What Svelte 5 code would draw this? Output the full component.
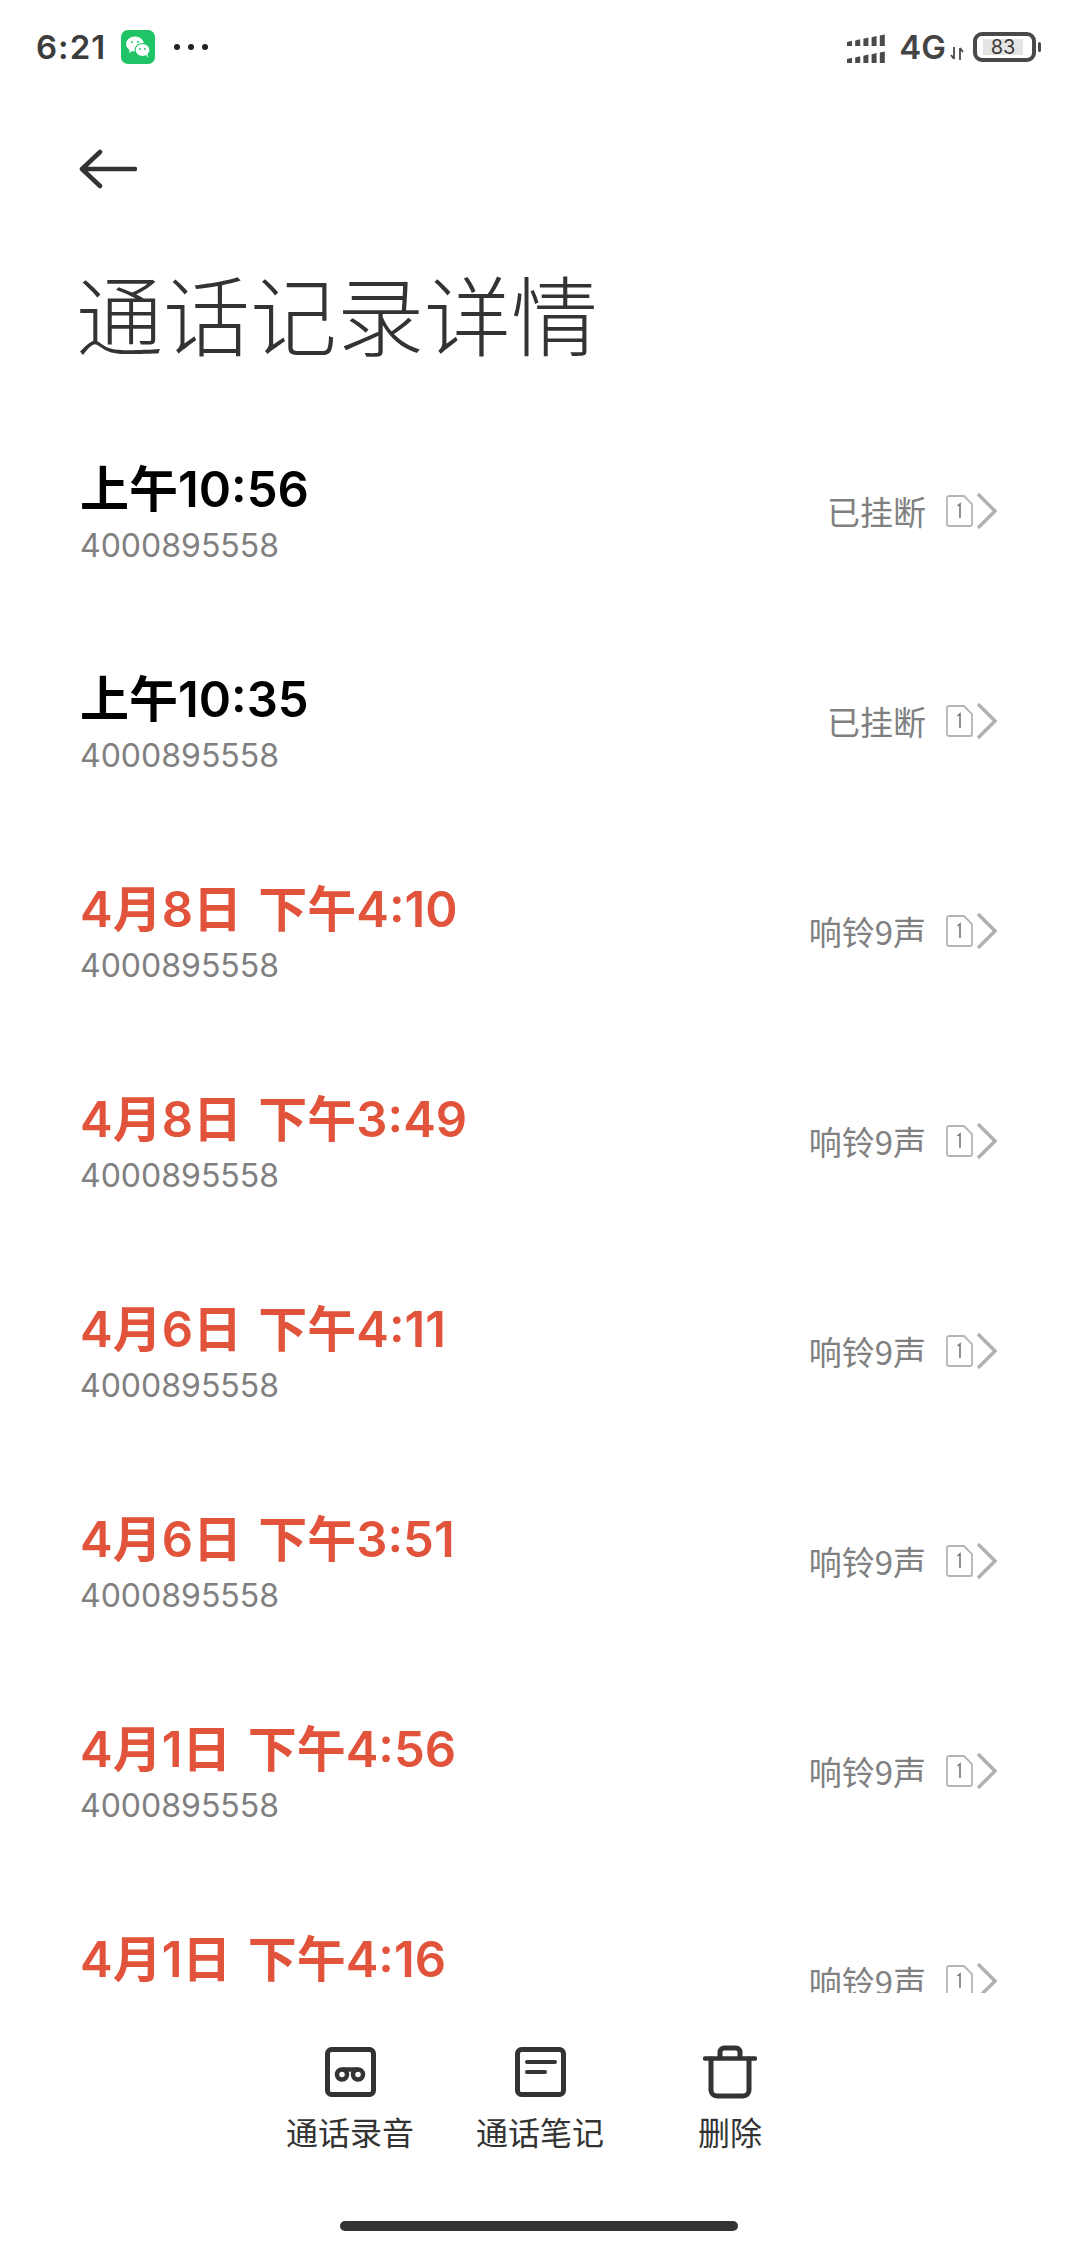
<script>
  const missed = "#e2533b";
  const calls = [
    { time: "上午10:56", status: "已挂断" },
    { time: "上午10:35", status: "已挂断" },
    { time: "4月8日 下午4:10", status: "响铃9声", missed: true },
    { time: "4月8日 下午3:49", status: "响铃9声", missed: true },
    { time: "4月6日 下午4:11", status: "响铃9声", missed: true },
    { time: "4月6日 下午3:51", status: "响铃9声", missed: true },
    { time: "4月1日 下午4:56", status: "响铃9声", missed: true },
    { time: "4月1日 下午4:16", status: "响铃9声", missed: true }
  ];
  const bars = [0, 1, 2, 3, 4];
</script>

<div class="page">
  <div class="status">
    <div class="status-left">
      <span class="clock">6:21</span>
      <svg class="wechat" width="34" height="34" viewBox="0 0 34 34">
        <rect width="34" height="34" rx="7" fill="#1fc467" />
        <ellipse cx="14" cy="14" rx="9" ry="7.5" fill="#fff" />
        <path d="M9 19l-1 4 5-3z" fill="#fff" />
        <ellipse cx="21.5" cy="20" rx="7.5" ry="6.5" fill="#fff" stroke="#1fc467" stroke-width="1.2" />
        <path d="M25 25l2 3-.5-4z" fill="#fff" />
        <circle cx="11" cy="12" r="1" fill="#1fc467" />
        <circle cx="17" cy="12" r="1" fill="#1fc467" />
        <circle cx="19" cy="19" r=".9" fill="#1fc467" />
        <circle cx="24" cy="19" r=".9" fill="#1fc467" />
      </svg>
      <span class="dots"><i></i><i></i><i></i></span>
    </div>
    <div class="status-right">
      <svg width="40" height="31" viewBox="0 0 40 31" fill="#4a4a4a">
        {#each bars as b}
          <path d="M{b * 8.2} {10 - b * 1.6}l5 -1.2V14H{b * 8.2}z" />
          <path d="M{b * 8.2} {27 - b * 1.6}l5 -1.2V31H{b * 8.2}z" />
        {/each}
      </svg>
      <span class="net">4G</span>
      <svg class="updown" width="14" height="13" viewBox="0 0 14 13" fill="none" stroke="#4a4a4a" stroke-width="1.8">
        <path d="M4 0v12M1 8l3 4M10 13V1M10 1l3 4" />
      </svg>
      <div class="battery"><span>83</span></div>
      <div class="nub"></div>
    </div>
  </div>

  <div class="nav">
    <svg width="58" height="40" viewBox="0 0 58 40" fill="none" stroke="#333" stroke-width="4.5" stroke-linecap="round" stroke-linejoin="round">
      <path d="M56 20H3M21 3L3 20l18 17" />
    </svg>
  </div>

  <h1>通话记录详情</h1>

  <div class="list">
    {#each calls as call}
      <div class="row">
        <div class="info">
          <div class="time" style:color={call.missed ? missed : "#000"}>{call.time}</div>
          <div class="number">4000895558</div>
        </div>
        <div class="meta">
          <span class="state">{call.status}</span>
          <svg class="sim" width="27" height="32" viewBox="0 0 27 32" fill="none">
            <path d="M3 1h15l8 8v20a2 2 0 0 1-2 2H3a2 2 0 0 1-2-2V3a2 2 0 0 1 2-2z" stroke="#b5b5b5" stroke-width="1.8" />
            <path d="M11.5 11l2.500-2v14" stroke="#777" stroke-width="1.6" />
          </svg>
          <svg class="chevron" width="20" height="36" viewBox="0 0 20 36" fill="none">
            <path d="M1 1l17 17L1 35" stroke="#b0b0b0" stroke-width="3.4" />
          </svg>
        </div>
      </div>
    {/each}
  </div>

  <div class="actions">
    <div class="action">
      <svg width="54" height="54" viewBox="0 0 54 54" fill="none" stroke="#333" stroke-width="5">
        <rect x="4.500" y="4.500" width="46" height="45" rx="4" />
        <circle cx="19" cy="29.500" r="5" stroke-width="4.500" />
        <circle cx="35" cy="29.500" r="5" stroke-width="4.500" />
        <path d="M19 24.500h16" stroke-width="4.500" />
      </svg>
      <span>通话录音</span>
    </div>
    <div class="action">
      <svg width="54" height="54" viewBox="0 0 54 54" fill="none" stroke="#333" stroke-width="5">
        <rect x="4.500" y="4.500" width="46" height="45" rx="4" />
        <path d="M14 17h28M14 27h18" stroke-width="4" stroke-linecap="round" />
      </svg>
      <span>通话笔记</span>
    </div>
    <div class="action">
      <svg width="54" height="54" viewBox="0 0 54 54" fill="none" stroke="#333" stroke-width="5" stroke-linecap="round" stroke-linejoin="round">
        <path d="M2 13.500h50" stroke-width="4.500" />
        <path d="M8 14v31a6 6 0 0 0 6 6h26a6 6 0 0 0 6-6V14" />
        <path d="M17 12V7a4 4 0 0 1 4-4h12a4 4 0 0 1 4 4v5" />
      </svg>
      <span>删除</span>
    </div>
  </div>

  <div class="home"></div>
</div>

<style>
  :global(body) {
    margin: 0;
    background: #fff;
  }
  .page {
    position: relative;
    width: 1080px;
    height: 2248px;
    display: flex;
    flex-direction: column;
    overflow: hidden;
    background: #fff;
    font-family: "Noto Sans CJK SC", "Noto Sans", sans-serif;
    color: #333;
  }
  .status {
    height: 94px;
    flex: none;
    display: flex;
    justify-content: space-between;
    align-items: center;
    padding: 0 39px 0 36px;
  }
  .status-left,
  .status-right {
    display: flex;
    align-items: center;
  }
  .clock {
    font-family: Inter, sans-serif;
    font-size: 33px;
    font-weight: 600;
    letter-spacing: 1px;
    color: #3c3c3c;
  }
  .wechat {
    margin-left: 15px;
  }
  .dots {
    display: flex;
    gap: 8px;
    margin-left: 19px;
  }
  .dots i {
    width: 6px;
    height: 6px;
    border-radius: 50%;
    background: #222;
  }
  .net {
    font-family: Inter, sans-serif;
    font-size: 33px;
    font-weight: 600;
    color: #444;
    margin-left: 12px;
    line-height: 40px;
  }
  .updown {
    margin: 12px 0 0 4px;
  }
  .battery {
    width: 63px;
    height: 30px;
    box-sizing: border-box;
    border: 4px solid #4a4a4a;
    border-radius: 9px;
    margin-left: 9px;
    padding: 3px;
    display: flex;
  }
  .battery span {
    width: 40px;
    margin-left: 3px;
    background: #e4e4e4;
    font-family: Inter, sans-serif;
    font-size: 20px;
    line-height: 16px;
    text-align: center;
    color: #3a3a3a;
  }
  .nub {
    width: 3px;
    height: 10px;
    border-radius: 2px;
    background: #4a4a4a;
    margin-left: 2px;
  }
  .nav {
    height: 150px;
    flex: none;
    display: flex;
    align-items: center;
    padding-left: 79px;
  }
  h1 {
    margin: 0 0 15px;
    height: 148px;
    flex: none;
    padding-left: 76px;
    font-size: 87px;
    font-weight: 300;
    line-height: 136px;
    color: #333;
  }
  .list {
    height: 1586px;
    flex: none;
    overflow: hidden;
  }
  .row {
    height: 210px;
    box-sizing: border-box;
    padding: 0 83px 0 80px;
    display: flex;
    justify-content: space-between;
    align-items: center;
  }
  .info {
    padding-top: 8px;
  }
  .time {
    font-family: Inter, "Noto Sans CJK SC", sans-serif;
    font-size: 49px;
    font-weight: 600;
    line-height: 60px;
    word-spacing: 4px;
    white-space: pre;
  }
  .number {
    font-family: Inter, sans-serif;
    font-size: 32px;
    line-height: 52px;
    color: #808080;
  }
  .meta {
    display: flex;
    align-items: center;
    padding-bottom: 2px;
  }
  .state {
    font-size: 33px;
    color: #808080;
    line-height: 44px;
  }
  .sim {
    margin-left: 20px;
  }
  .chevron {
    margin-left: 4px;
  }
  .actions {
    flex: none;
    display: flex;
    justify-content: center;
    padding-top: 52px;
  }
  .action {
    width: 190px;
    display: flex;
    flex-direction: column;
    align-items: center;
    gap: 10px;
  }
  .action span {
    font-size: 32px;
    line-height: 44px;
    color: #333;
  }
  .home {
    position: absolute;
    left: 340px;
    top: 2221px;
    width: 398px;
    height: 10px;
    border-radius: 5px;
    background: #333;
  }
</style>
